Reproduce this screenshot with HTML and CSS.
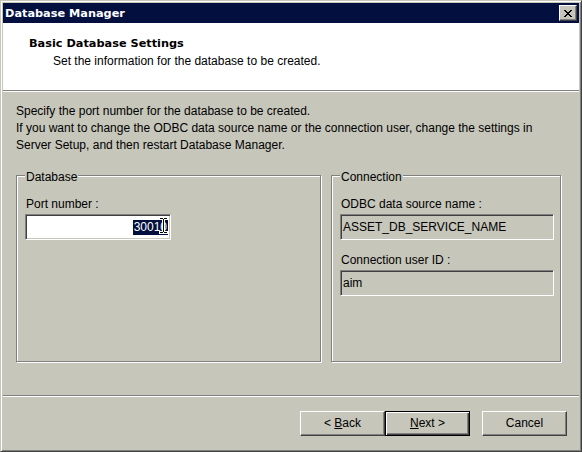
FILE: index.html
```html
<!DOCTYPE html>
<html>
<head>
<meta charset="utf-8">
<title>Database Manager</title>
<link rel="stylesheet" href="styles.css">
</head>
<body>
<div class="window">
  <div class="titlebar">
    <span class="title">Database Manager</span>
    <span class="close">
      <svg width="8" height="7" viewBox="0 0 8 7" shape-rendering="crispEdges"><path fill="#000" d="M0 0h2v1H0z M6 0h2v1H6z M1 1h2v1H1z M5 1h2v1H5z M2 2h4v1H2z M3 3h2v1H3z M2 4h4v1H2z M1 5h2v1H1z M5 5h2v1H5z M0 6h2v1H0z M6 6h2v1H6z"/></svg>
    </span>
  </div>
  <div class="header">
    <div class="h-title">Basic Database Settings</div>
    <div class="h-sub">Set the information for the database to be created.</div>
  </div>
  <div class="content">
    <div class="intro">
      <div>Specify the port number for the database to be created.</div>
      <div>If you want to change the ODBC data source name or the connection user, change the settings in</div>
      <div>Server Setup, and then restart Database Manager.</div>
    </div>
    <div class="groups">
      <div class="group group-db">
        <span class="legend">Database</span>
        <div class="label">Port number :</div>
        <div class="field field-edit field-port"><span class="sel">30010</span>
          <svg class="ibeam" width="9" height="17" viewBox="-1 -1 9 17" shape-rendering="crispEdges"><path fill="#fff" d="M-1 -1h9v3h-3v11h3v3h-9v-3h3v-11h-3z"/><path fill="#000" d="M0 0h3v1H0z M4 0h3v1H4z M3 1h1v13H3z M0 14h3v1H0z M4 14h3v1H4z"/></svg>
        </div>
      </div>
      <div class="group group-conn">
        <span class="legend">Connection</span>
        <div class="label">ODBC data source name :</div>
        <div class="field field-ro field-wide">ASSET_DB_SERVICE_NAME</div>
        <div class="label label-gap">Connection user ID :</div>
        <div class="field field-ro field-wide">aim</div>
      </div>
    </div>
  </div>
  <div class="footer">
    <button class="btn">&lt; <u>B</u>ack</button>
    <button class="btn btn-default"><u>N</u>ext &gt;</button>
    <button class="btn btn-cancel">Cancel</button>
  </div>
</div>
</body>
</html>
```
FILE: styles.css
```css
html, body {
  margin: 0;
  padding: 0;
  background: #c6c6bb;
}
body {
  font-family: "Liberation Sans", Arial, sans-serif;
  font-size: 12px;
  color: #000;
}
.window {
  width: 582px;
  height: 452px;
  box-sizing: border-box;
  border: 1px solid;
  border-color: #c6c6bb #404040 #404040 #c6c6bb;
  box-shadow: inset 1px 1px 0 #fff, inset -1px -1px 0 #808080;
  padding: 2px;
  background: #c6c6bb;
  display: flex;
  flex-direction: column;
}
.titlebar {
  height: 20px;
  flex: none;
  background: #03103f;
  color: #fff;
  display: flex;
  align-items: flex-start;
  padding-left: 2px;
}
.title {
  font-family: "DejaVu Sans", sans-serif;
  font-weight: bold;
  font-size: 11.3px;
  line-height: 18px;
  padding-top: 2px;
}
.close {
  margin-left: auto;
  margin-right: 2px;
  margin-top: 2px;
  width: 18px;
  height: 16px;
  box-sizing: border-box;
  background: #c6c6bb;
  border: 1px solid;
  border-color: #fff #404040 #404040 #fff;
  box-shadow: inset -1px -1px 0 #808080;
  display: flex;
  align-items: center;
  justify-content: center;
}
.close svg {
  display: block;
}
.header {
  flex: none;
  height: 68px;
  box-sizing: border-box;
  background: #fff;
  border-bottom: 1px solid #808080;
  padding: 13px 0 0 26px;
}
.h-title {
  font-family: "DejaVu Sans", sans-serif;
  font-weight: bold;
  font-size: 11.3px;
  line-height: 16px;
}
.h-sub {
  margin-top: 1px;
  margin-left: 24px;
  line-height: 16px;
}
.content {
  flex: none;
  height: 304px;
  box-sizing: border-box;
  border-top: 1px solid #fff;
  padding: 11px 0 0 13px;
}
.intro {
  line-height: 17px;
  white-space: nowrap;
}
.groups {
  display: flex;
  gap: 10px;
  margin-top: 21px;
}
.group {
  position: relative;
  height: 187px;
  box-sizing: border-box;
  border: 1px solid #808080;
  box-shadow: inset 1px 1px 0 #fff, 1px 1px 0 #fff;
  padding: 20px 0 0 8px;
}
.group-db {
  width: 305px;
}
.group-conn {
  width: 230px;
}
.legend {
  position: absolute;
  left: 8px;
  top: -6px;
  line-height: 14px;
  padding: 0 1px;
  background: #c6c6bb;
}
.label {
  line-height: 16px;
  padding-left: 1px;
}
.label-gap {
  margin-top: 12px;
}
.field {
  margin-top: 2px;
  height: 26px;
  box-sizing: border-box;
  border: 1px solid;
  border-color: #808080 #fff #fff #808080;
  box-shadow: inset 1px 1px 0 #404040, inset -1px -1px 0 #c6c6bb;
  line-height: 24px;
  padding-left: 2px;
  white-space: nowrap;
}
.field-edit {
  background: #fff;
}
.field-port {
  position: relative;
  width: 146px;
  display: flex;
  justify-content: flex-end;
  align-items: center;
  padding-right: 2px;
}
.sel {
  display: block;
  background: #03103f;
  color: #fff;
  line-height: 15px;
  padding: 0 1px;
}
.ibeam {
  position: absolute;
  left: 133px;
  top: 2px;
  display: block;
}
.field-ro {
  background: #c6c6bb;
}
.field-wide {
  width: 214px;
}
.footer {
  flex: 1;
  border-top: 1px solid #808080;
  box-shadow: inset 0 1px 0 #fff;
  display: flex;
  justify-content: flex-end;
  align-items: flex-start;
  padding: 15px 12px 0 0;
}
.btn {
  width: 85px;
  height: 25px;
  box-sizing: border-box;
  margin: 0;
  padding: 0;
  font-family: "Liberation Sans", Arial, sans-serif;
  font-size: 12px;
  line-height: 23px;
  color: #000;
  background: #c6c6bb;
  border: 1px solid;
  border-color: #fff #404040 #404040 #fff;
  box-shadow: inset -1px -1px 0 #808080;
  border-radius: 0;
  text-align: center;
}
.btn u {
  text-underline-offset: 1px;
}
.btn-default {
  border-color: #000;
  box-shadow: inset 1px 1px 0 #fff, inset -1px -1px 0 #404040, inset -2px -2px 0 #808080;
}
.btn-cancel {
  margin-left: 12px;
}
```
